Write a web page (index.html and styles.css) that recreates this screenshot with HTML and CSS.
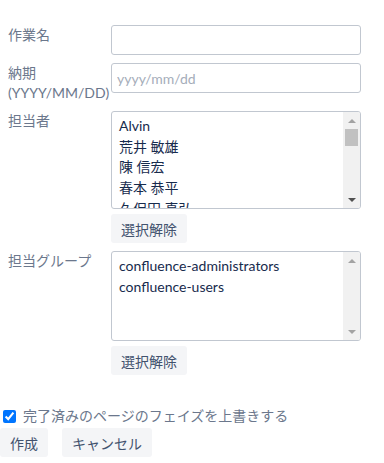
FILE: index.html
```html
<!DOCTYPE html>
<html lang="ja">
<head>
    <meta charset="UTF-8">
    <meta name="viewport" content="width=device-width, initial-scale=1.0">
    <title>タスク作成</title>
    <link rel="stylesheet" href="styles.css">
</head>
<body>
    <form class="tarefa">
        <div class="linha">
            <label class="rotulo" for="nome">作業名</label>
            <div class="campo">
                <input type="text" id="nome" class="entrada">
            </div>
        </div>
        <div class="linha">
            <label class="rotulo" for="prazo">納期<br>(YYYY/MM/DD)</label>
            <div class="campo">
                <input type="text" id="prazo" class="entrada" placeholder="yyyy/mm/dd">
            </div>
        </div>
        <div class="linha">
            <span class="rotulo">担当者</span>
            <div class="campo">
                <div class="lista lista-pessoas" role="listbox" aria-multiselectable="true">
                    <div class="itens">
                        <div class="item">Alvin</div>
                        <div class="item">荒井 敏雄</div>
                        <div class="item">陳 信宏</div>
                        <div class="item">春本 恭平</div>
                        <div class="item">久保田 真弘</div>
                    </div>
                    <div class="rolagem">
                        <span class="seta seta-cima inativa"></span>
                        <span class="trilho"><span class="polegar"></span></span>
                        <span class="seta seta-baixo"></span>
                    </div>
                </div>
                <button type="button" class="botao limpar">選択解除</button>
            </div>
        </div>
        <div class="linha">
            <span class="rotulo">担当グループ</span>
            <div class="campo">
                <div class="lista lista-grupos" role="listbox" aria-multiselectable="true">
                    <div class="itens">
                        <div class="item">confluence-administrators</div>
                        <div class="item">confluence-users</div>
                    </div>
                    <div class="rolagem">
                        <span class="seta seta-cima inativa"></span>
                        <span class="trilho"></span>
                        <span class="seta seta-baixo inativa"></span>
                    </div>
                </div>
                <button type="button" class="botao limpar">選択解除</button>
            </div>
        </div>
        <div class="marcar">
            <input type="checkbox" id="sobrescrever" checked>
            <label for="sobrescrever">完了済みのページのフェイズを上書きする</label>
        </div>
        <div class="acoes">
            <button type="button" class="botao">作成</button>
            <button type="button" class="botao">キャンセル</button>
        </div>
    </form>
</body>
</html>
```

FILE: styles.css
```css
* {
    box-sizing: border-box;
}

body {
    margin: 0;
    background-color: white;
    font-family: Lato, "Noto Sans CJK JP", sans-serif;
    font-size: 14px;
    color: #172b4d;
}

.tarefa {
    width: 384px;
    padding-top: 25px;
}

.linha {
    display: flex;
    margin-bottom: 8px;
}

.rotulo {
    width: 111px;
    padding-left: 8px;
    line-height: 20px;
    color: #6b778c;
}

.campo {
    width: 250px;
}

.entrada {
    display: block;
    width: 100%;
    height: 30px;
    padding: 0 5px;
    border: 1px solid #c1c7d0;
    border-radius: 3px;
    font-family: inherit;
    font-size: 14px;
    color: #172b4d;
    outline: none;
}

.entrada::placeholder {
    color: #a5adba;
}

.lista {
    display: flex;
    width: 100%;
    border: 1px solid #c1c7d0;
    border-radius: 3px;
    background-color: white;
    overflow: hidden;
}

.lista-pessoas {
    height: 98px;
}

.lista-grupos {
    height: 90px;
}

.itens {
    flex: 1;
    padding: 4px 0 0 7px;
    overflow: hidden;
}

.item {
    height: 20.7px;
    line-height: 20px;
    white-space: nowrap;
    cursor: default;
}

/* barra de rolagem desenhada no estilo classico do Windows */
.rolagem {
    display: flex;
    flex-direction: column;
    width: 17px;
    background-color: #f1f1f1;
}

.seta {
    display: flex;
    align-items: center;
    justify-content: center;
    height: 17px;
}

.seta::before {
    content: "";
    border-left: 4px solid transparent;
    border-right: 4px solid transparent;
}

.seta-cima::before {
    border-bottom: 4px solid #505050;
}

.seta-baixo::before {
    border-top: 4px solid #505050;
}

.seta-cima.inativa::before {
    border-bottom-color: #a3a3a3;
}

.seta-baixo.inativa::before {
    border-top-color: #a3a3a3;
}

.trilho {
    flex: 1;
}

.polegar {
    display: block;
    height: 17px;
    margin: 0 2px;
    background-color: #c1c1c1;
}

.botao {
    height: 29px;
    padding: 0 10px;
    border: none;
    border-radius: 3px;
    background-color: #f4f5f7;
    font-family: inherit;
    font-size: 14px;
    color: #42526e;
}

.limpar {
    margin-top: 5px;
}

.marcar {
    display: flex;
    align-items: center;
    height: 20px;
    margin-top: 31px;
    color: #6b778c;
    line-height: 20px;
}

.marcar input {
    width: 13px;
    height: 13px;
    margin: 0 7px 0 3px;
}

.acoes {
    display: flex;
    gap: 14px;
    margin-top: 2px;
}
```
